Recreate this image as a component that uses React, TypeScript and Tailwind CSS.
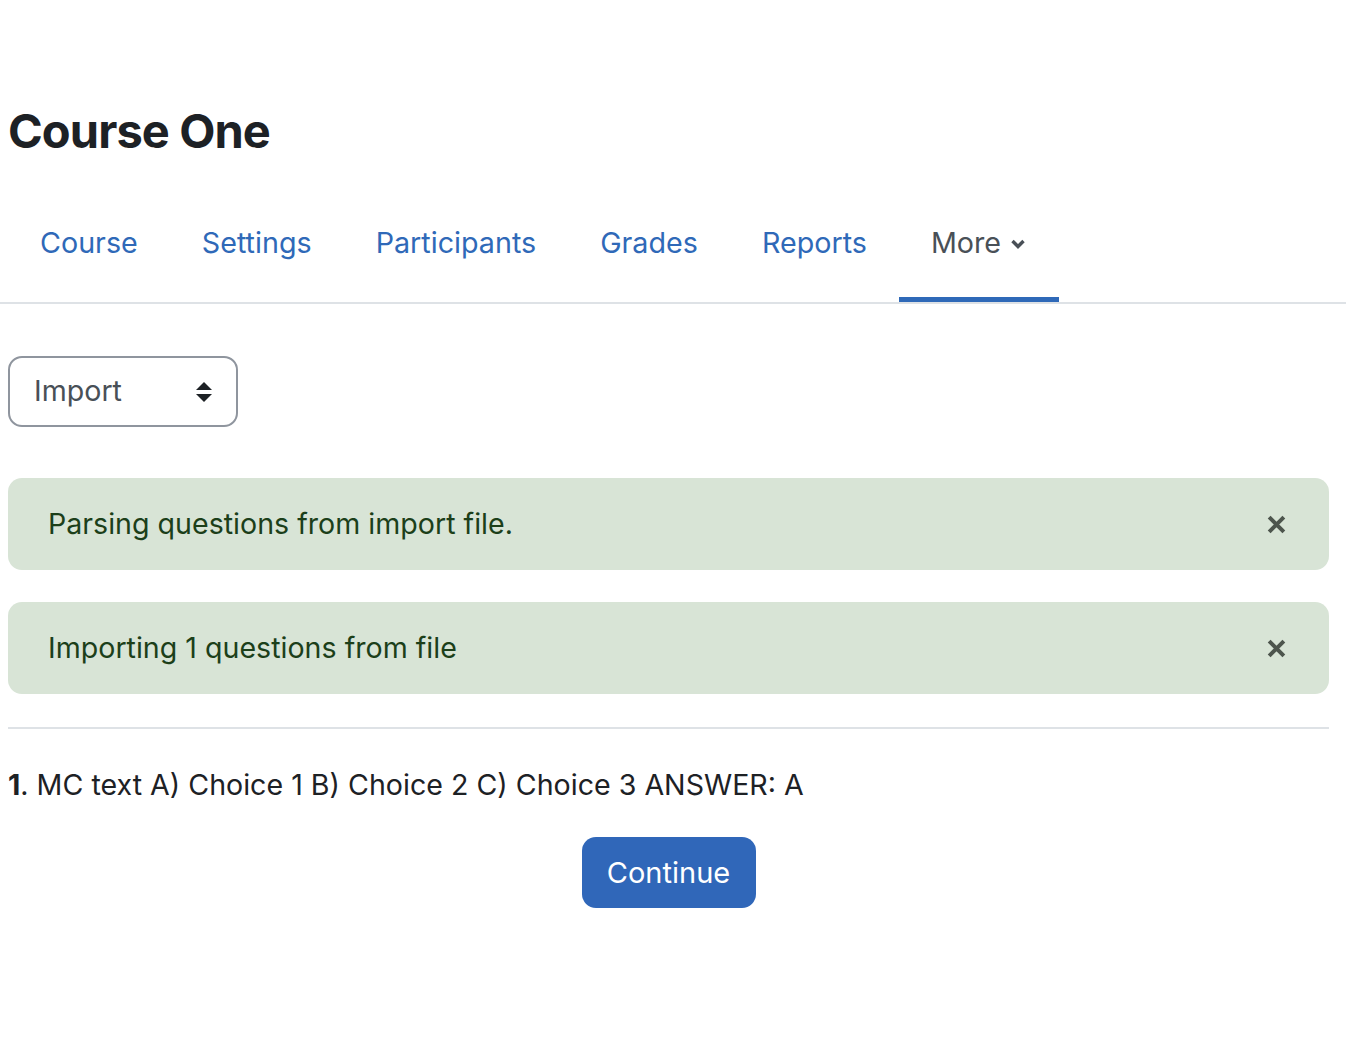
import React from 'react'

const tabs = ['Course', 'Settings', 'Participants', 'Grades', 'Reports']

function CloseIcon() {
  return (
    <svg width="21" height="21" viewBox="0 0 20 20" aria-hidden="true">
      <path d="M3 3 L17 17 M17 3 L3 17" stroke="#4d554d" strokeWidth="3.8" strokeLinecap="butt" />
    </svg>
  )
}

function Alert({ text }: { text: string }) {
  return (
    <div className="flex items-center justify-between rounded-[14px] bg-[#d8e4d6] h-[92px] pl-10 pr-[42px] text-[28.6px] text-[#1c3f1a]">
      <span>{text}</span>
      <button className="flex items-center">
        <CloseIcon />
      </button>
    </div>
  )
}

export default function App() {
  return (
    <div className="min-h-screen bg-white pl-2 pr-[17px] text-[#1d2125]" style={{ fontFamily: 'Inter, "Noto Sans", sans-serif' }}>
      <h1 className="pt-[100px] text-[47px] font-bold leading-[62px] tracking-[-0.9px]">Course One</h1>

      {/* secondary navigation */}
      <nav className="mt-[42px] -mr-[17px] -ml-2 pl-2 border-b-2 border-[#dee2e6]">
        <ul className="flex">
          {tabs.map((t) => (
            <li key={t}>
              <a className="block px-8 h-[98px] pt-[17px] text-[28.7px] text-[#2f69b8]">{t}</a>
            </li>
          ))}
          <li>
            <a className="flex items-start gap-2 px-8 h-[98px] pt-[17px] text-[28.7px] text-[#495057] border-b-[5px] border-[#2f69b8] -mb-[2px]">
              More
              <svg width="18" height="18" viewBox="0 0 18 18" className="mt-[14px]" aria-hidden="true">
                <path d="M3.5 6 L9 11.5 L14.5 6" fill="none" stroke="#495057" strokeWidth="3.4" />
              </svg>
            </a>
          </li>
        </ul>
      </nav>

      {/* action select */}
      <div className="mt-[52px] flex items-center justify-between w-[230px] h-[71px] rounded-[14px] border-2 border-[#8f959e] pl-6 pr-6 text-[28.6px] text-[#495057]">
        <span>Import</span>
        <svg width="16" height="22" viewBox="0 0 16 22" aria-hidden="true">
          <path d="M8 1 L16 9 L0 9 Z M8 21 L16 13 L0 13 Z" fill="#1d2125" />
        </svg>
      </div>

      <div className="mt-[51px] flex flex-col gap-[32px]">
        <Alert text="Parsing questions from import file." />
        <Alert text="Importing 1 questions from file" />
      </div>

      <hr className="mt-[33px] border-t-2 border-[#dee2e6]" />

      <p className="mt-[36px] text-[28.6px] leading-[40px]">
        <b className="font-bold">1</b>. MC text A) Choice 1 B) Choice 2 C) Choice 3 ANSWER: A
      </p>

      <div className="mt-[32px] flex justify-center">
        <button className="h-[71px] w-[174px] rounded-[14px] bg-[#3067b9] text-[29px] text-white">Continue</button>
      </div>
    </div>
  )
}
